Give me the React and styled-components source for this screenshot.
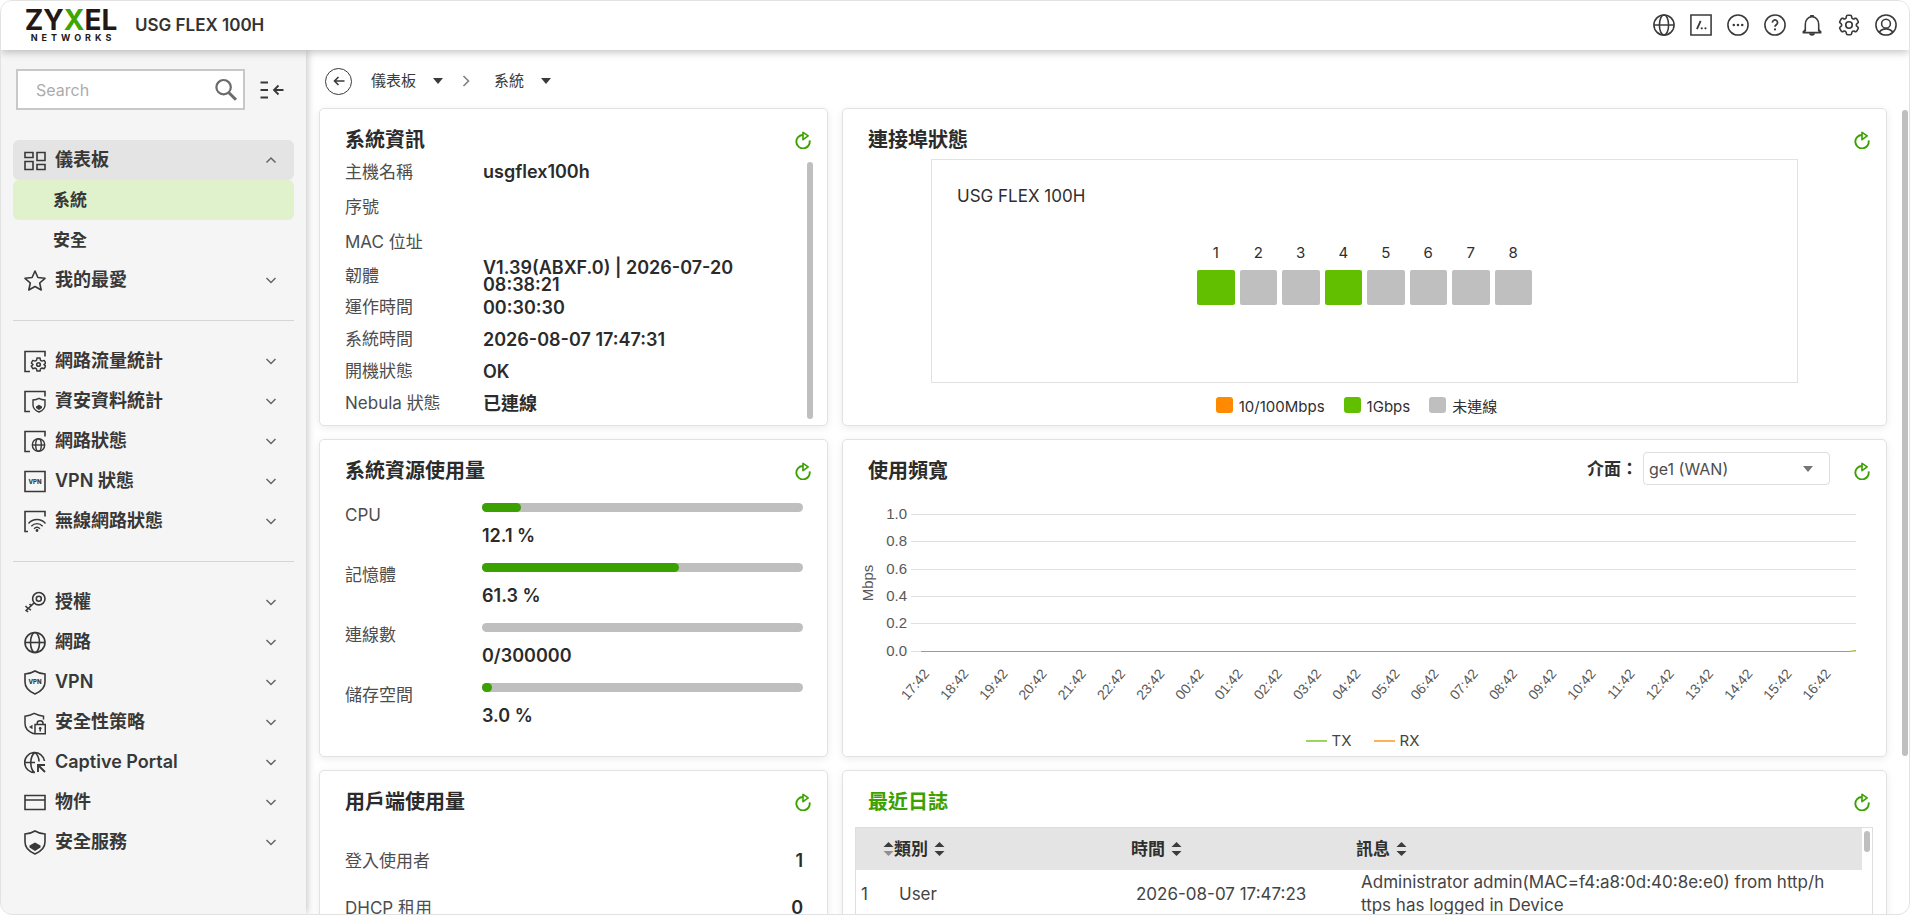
import React from 'react';
import styled, { createGlobalStyle, css } from 'styled-components';
import { HiOutlineCog6Tooth } from 'react-icons/hi2';

const GlobalStyle = createGlobalStyle`
  *, *::before, *::after {
    box-sizing: border-box;
  }
  body {
    margin: 0;
    background: #fff;
    color: #2f2f2f;
    font-family: Inter, 'Noto Sans CJK TC', sans-serif;
    font-size: 17px;
    line-height: 24px;
  }
  button, input, select {
    font: inherit;
    color: inherit;
  }
  h1, h2, p, dl, dd, ul {
    margin: 0;
    padding: 0;
  }
  svg {
    display: block;
  }
`;

/* icons */

const Icon = ({ children, size = 22, box = 24, weight = 1.7 }) => (
  <svg
    width={size}
    height={size}
    viewBox={`0 0 ${box} ${box}`}
    fill="none"
    stroke="currentColor"
    strokeWidth={weight}
    aria-hidden="true"
  >
    {children}
  </svg>
);

const solid = { fill: 'currentColor', stroke: 'none' };

const GlobeIcon = () => (
  <Icon>
    <circle cx="12" cy="12" r="11" />
    <ellipse cx="12" cy="12" rx="5" ry="11" />
    <path d="M1 12h22" />
  </Icon>
);

const ConsoleIcon = () => (
  <Icon>
    <path d="M1 1h22v22H1z" />
    <path d="M11.6 7.5 7.6 16.5" strokeWidth="2" />
    <circle cx="12.8" cy="15.6" r="1.2" {...solid} />
    <circle cx="16.9" cy="15.6" r="1.2" {...solid} />
  </Icon>
);

const MoreIcon = () => (
  <Icon>
    <circle cx="12" cy="12" r="11" />
    <circle cx="7.4" cy="12" r="1.4" {...solid} />
    <circle cx="12" cy="12" r="1.4" {...solid} />
    <circle cx="16.6" cy="12" r="1.4" {...solid} />
  </Icon>
);

const HelpIcon = () => (
  <Icon>
    <circle cx="12" cy="12" r="11" />
    <path d="M9.2 9.4a2.8 2.8 0 1 1 4.4 2.2c-1 .8-1.6 1.2-1.6 2.4" strokeWidth="1.9" />
    <circle cx="12" cy="16.8" r="1.2" {...solid} />
  </Icon>
);

const BellIcon = () => (
  <Icon>
    <path d="M4.7 19V11.2C4.7 6.6 7.7 3 12 3s7.3 3.6 7.3 8.2V19" />
    <path d="M2 20.2l2.7-3M22 20.2l-2.7-3M1.8 20.3h20.4" strokeWidth="2" />
    <path d="M10 1.2h4v2h-4zM8.8 21h6.4a3.2 2.6 0 0 1-6.4 0z" {...solid} />
  </Icon>
);

const UserIcon = () => (
  <Icon>
    <circle cx="12" cy="12" r="11" />
    <circle cx="12" cy="10.5" r="4.8" />
    <path d="M4.6 19.8c1.8-2.4 4.3-3.6 7.4-3.6s5.6 1.2 7.4 3.6" />
  </Icon>
);

const RefreshIcon = () => (
  <svg width="16" height="18" viewBox="0 0 16 18" fill="none" stroke="currentColor" strokeWidth="1.9" aria-hidden="true">
    <path d="M14.6 9.4A6.7 6.7 0 1 1 8 4" />
    <path d="M8 1.3 13.2 4.9 8 8.7z" strokeWidth="1.6" strokeLinejoin="round" />
  </svg>
);

const SearchIcon = () => (
  <Icon size={24} weight={2.2}>
    <circle cx="9.6" cy="9.2" r="7.2" />
    <path d="M14.9 14.7 22 21.8" strokeWidth="3" />
  </Icon>
);

const CollapseIcon = () => (
  <Icon size={24} weight={1.8}>
    <path d="M.5 4.500H8M.5 12H8M.5 19.500H8M14.5 12H23.500M18.500 7.500 14 12l4.500 4.500" />
  </Icon>
);

const ChevronIcon = ({ up }) => (
  <Icon size={12} box={12} weight={1.5}>
    <path d={up ? 'M1.500 8.500 6 4l4.500 4.500' : 'M1.500 4 6 8.500 10.500 4'} />
  </Icon>
);

const Corner = () => <path d="M6 21H1V1h20v5" />;

const shield = 'M11 1c3 1.800 6.300 2.800 10 3v8c0 5-4 9.500-10 12C5 21.500 1 17 1 12V4c3.700-.2 7-1.200 10-3z';

const Vpn = ({ y }) => (
  <text x="11" y={y} fontSize="6" fontWeight="800" textAnchor="middle" fill="currentColor" stroke="none">
    VPN
  </text>
);

const menuIcons = {
  dashboard: <path d="M1 3h8v5H1zM13 3h8v8h-8zM1 12h8v8H1zM13 15h8v5h-8z" />,
  star: <path d="M11 1.500l2.900 6.500 7.100.8-5.300 4.700 1.500 7L11 17l-6.200 3.500 1.500-7L1 8.800l7.100-.8z" strokeLinejoin="round" />,
  traffic: (
    <>
      <Corner />
      <circle cx="14.5" cy="14" r="1.8" />
      <path
        d="M13 7.500h3l.5 2.300 1.500.8 2.200-.7 1.500 2.600-1.700 1.500v.1l1.700 1.500-1.500 2.600-2.200-.7-1.500.8-.5 2.300h-3l-.5-2.300-1.500-.8-2.200.7-1.500-2.600L9 14.100V14l-1.700-1.500 1.500-2.600 2.200.7 1.500-.8z"
        strokeWidth="1.5"
        strokeLinejoin="round"
      />
    </>
  ),
  security: (
    <>
      <Corner />
      <path d="M15 7.800c1.800 1 3.700 1.500 6 1.700v5c0 3-2.200 5.500-6 7-3.800-1.500-6-4-6-7v-5c2.300-.2 4.200-.7 6-1.700z" strokeWidth="1.4" />
      <path d="M15 14.300l3 1.700v1.500l-3 2-3-2V16z" {...solid} />
    </>
  ),
  network: (
    <>
      <Corner />
      <circle cx="14.5" cy="14.5" r="6.2" strokeWidth="1.4" />
      <ellipse cx="14.5" cy="14.5" rx="2.8" ry="6.2" strokeWidth="1.4" />
      <path d="M8.300 14.500h12.400" strokeWidth="1.4" />
    </>
  ),
  vpnStatus: (
    <>
      <path d="M1 1h20v20H1z" />
      <Vpn y="13.2" />
    </>
  ),
  wifi: (
    <>
      <path d="M4 21H1V1h20v5" />
      <path d="M4.500 13c4.700-5.300 12.300-5.300 17 0M7.300 15.700c3.200-3.500 8.200-3.500 11.400 0M10 18.200c1.800-1.800 4.200-1.800 6 0" strokeWidth="1.4" />
      <circle cx="13" cy="20" r="1.4" {...solid} />
    </>
  ),
  key: (
    <>
      <circle cx="14.8" cy="7.2" r="6.2" />
      <circle cx="14.8" cy="7.2" r="2.5" />
      <path d="M10 11.500l-8.500 8M4.500 16.500l2.300 2.300M2 18.500l2 2M1.500 14.500l2.500 2.500M5.500 12.500l2.300 2.300" />
    </>
  ),
  globe: (
    <>
      <circle cx="11" cy="11" r="10" />
      <ellipse cx="11" cy="11" rx="4.5" ry="10" />
      <path d="M1 11h20" />
    </>
  ),
  vpn: (
    <>
      <path d={shield} />
      <Vpn y="14" />
    </>
  ),
  policy: (
    <>
      <path d="M19.500 8V4.700C16.200 4.300 13.200 3.300 10.200 1.800 7.400 3.300 4.300 4.300 1 4.700V12c0 5 3 8 8 10h2" strokeWidth="1.5" />
      <path d="M11 13h10.300v9.200H11zM13.200 13v-1.200a2.900 2.500 0 0 1 5.800 0V13M16.200 16v4" strokeWidth="1.5" />
      <circle cx="16.2" cy="16.7" r="1.3" {...solid} />
      <path d="M8.500 13.200v4.600L5 15.500z" {...solid} />
    </>
  ),
  portal: (
    <>
      <path d="M20.500 9.500A10 10 0 1 0 11 21M11 1C5.500 5 5.500 17 10.500 21M11 1c3 2.500 4 5.500 4 9M1 11h10" />
      <path d="M14 20.500V13.500h7M14 13.500l7 7" strokeWidth="1.9" />
    </>
  ),
  object: <path d="M1 4h20v14H1zM1 8.500h20" />,
  service: (
    <>
      <path d={shield} />
      <path d="M11 12.500l5.500 3v2L11 21l-5.500-3.500v-2z" {...solid} />
    </>
  ),
};

const MenuIcon = ({ name }) => (
  <svg
    width="22"
    height="25"
    viewBox={['vpn', 'service'].includes(name) ? '0 0 22 25' : '0 -1.5 22 25'}
    fill="none"
    stroke="currentColor"
    strokeWidth="1.6"
    aria-hidden="true"
  >
    {menuIcons[name]}
  </svg>
);

/* data */

const menuGroups = [
  [
    { label: '儀表板', icon: 'dashboard', open: true, items: ['系統', '安全'] },
    { label: '我的最愛', icon: 'star' },
  ],
  [
    { label: '網路流量統計', icon: 'traffic' },
    { label: '資安資料統計', icon: 'security' },
    { label: '網路狀態', icon: 'network' },
    { label: 'VPN 狀態', icon: 'vpnStatus' },
    { label: '無線網路狀態', icon: 'wifi' },
  ],
  [
    { label: '授權', icon: 'key' },
    { label: '網路', icon: 'globe' },
    { label: 'VPN', icon: 'vpn' },
    { label: '安全性策略', icon: 'policy' },
    { label: 'Captive Portal', icon: 'portal' },
    { label: '物件', icon: 'object' },
    { label: '安全服務', icon: 'service' },
  ],
];

const systemInfo = [
  { label: '主機名稱', value: 'usgflex100h', tall: true },
  { label: '序號', value: '', tall: true },
  { label: 'MAC 位址', value: '', tall: true },
  { label: '韌體', value: 'V1.39(ABXF.0) | 2026-07-20 08:38:21' },
  { label: '運作時間', value: '00:30:30' },
  { label: '系統時間', value: '2026-08-07 17:47:31' },
  { label: '開機狀態', value: 'OK' },
  { label: 'Nebula 狀態', value: '已連線' },
];

const resources = [
  { label: 'CPU', percent: 12.1, value: '12.1 %' },
  { label: '記憶體', percent: 61.3, value: '61.3 %' },
  { label: '連線數', percent: 0, value: '0/300000' },
  { label: '儲存空間', percent: 3, value: '3.0 %' },
];

const clients = [
  { label: '登入使用者', value: 1 },
  { label: 'DHCP 租用', value: 0 },
];

const ports = [1, 2, 3, 4, 5, 6, 7, 8];
const activePorts = [1, 4];

const yTicks = ['1.0', '0.8', '0.6', '0.4', '0.2', '0.0'];
const hours = Array.from({ length: 24 }, (_, i) => `${String((17 + i) % 24).padStart(2, '0')}:42`);

/* parts */

function Card({ title, accent, tools, children }) {
  return (
    <Panel>
      <PanelHead>
        <PanelTitle $accent={accent}>{title}</PanelTitle>
        {tools}
        <RefreshButton type="button" aria-label={`重新整理 ${title}`}>
          <RefreshIcon />
        </RefreshButton>
      </PanelHead>
      {children}
    </Panel>
  );
}

function Sidebar() {
  return (
    <Side>
      <SearchRow>
        <SearchBox>
          <SearchInput type="text" placeholder="Search" aria-label="Search" />
          <SearchIcon />
        </SearchBox>
        <PlainButton type="button" aria-label="收合選單">
          <CollapseIcon />
        </PlainButton>
      </SearchRow>
      <nav>
        {menuGroups.map((group, i) => (
          <MenuGroup key={'group_' + i}>
            {group.map(({ label, icon, open, items }) => (
              <li key={label}>
                <MenuButton type="button" $open={open} aria-expanded={!!open}>
                  <MenuIcon name={icon} />
                  <MenuLabel>{label}</MenuLabel>
                  <MenuArrow>
                    <ChevronIcon up={open} />
                  </MenuArrow>
                </MenuButton>
                {items &&
                  items.map((item, j) => (
                    <SubLink href="#" key={item} $active={j == 0}>
                      {item}
                    </SubLink>
                  ))}
              </li>
            ))}
          </MenuGroup>
        ))}
      </nav>
    </Side>
  );
}

function BandwidthChart() {
  return (
    <Chart viewBox="0 0 1043 261" role="img" aria-label="TX / RX Mbps">
      {yTicks.map((tick, i) => {
        const y = Math.round(17 + i * 27.3) + 0.5;
        return (
          <g key={tick}>
            <path d={`M68 ${y}H1013`} stroke="#e0e0e0" />
            <text x="64" y={y + 4} textAnchor="end">
              {tick}
            </text>
          </g>
        );
      })}
      <path d="M78 154.500H1006l7-1" stroke="#93b81c" strokeWidth="1.2" fill="none" />
      <text transform="translate(30 86) rotate(-90)" textAnchor="middle">
        Mbps
      </text>
      {hours.map((hour, i) => (
        <text key={hour} transform={`translate(${87 + i * 39.2} 177) rotate(-50)`} textAnchor="end" fontSize="14">
          {hour}
        </text>
      ))}
    </Chart>
  );
}

const SortArrows = ({ dim }) => (
  <svg width="11" height="14" viewBox="0 0 11 14" fill="#3c3c3c" aria-hidden="true">
    <path d="M5.500 0 10.500 5H.5z" />
    <path d="M5.500 14 10.500 9H.5z" opacity={dim ? 0.5 : 1} />
  </svg>
);

export default function App() {
  return (
    <>
      <GlobalStyle />
      <Shell>
        <TopBar>
          <Logo>
            <LogoName>
              ZY<em>X</em>EL
            </LogoName>
            <LogoSub>NETWORKS</LogoSub>
          </Logo>
          <DeviceName>USG FLEX 100H</DeviceName>
          <TopTools>
            <PlainButton type="button" aria-label="語言">
              <GlobeIcon />
            </PlainButton>
            <PlainButton type="button" aria-label="主控台">
              <ConsoleIcon />
            </PlainButton>
            <PlainButton type="button" aria-label="更多">
              <MoreIcon />
            </PlainButton>
            <PlainButton type="button" aria-label="說明">
              <HelpIcon />
            </PlainButton>
            <PlainButton type="button" aria-label="通知">
              <BellIcon />
            </PlainButton>
            <PlainButton type="button" aria-label="設定">
              <HiOutlineCog6Tooth size={26} />
            </PlainButton>
            <PlainButton type="button" aria-label="帳號">
              <UserIcon />
            </PlainButton>
          </TopTools>
        </TopBar>

        <Body>
          <Sidebar />
          <Main>
            <Crumbs aria-label="Breadcrumb">
              <BackButton type="button" aria-label="返回">
                <Icon size={12} box={12} weight={1.6}>
                  <path d="M11.500 6H1.500M5.500 2l-4 4 4 4" />
                </Icon>
              </BackButton>
              <Crumb type="button">
                儀表板 <Caret />
              </Crumb>
              <Icon size={12} box={12} weight={1.6}>
                <path d="M3.500 1l5 5-5 5" />
              </Icon>
              <Crumb type="button">
                系統 <Caret />
              </Crumb>
            </Crumbs>

            <Scroller>
              <Grid>
                <Card title="系統資訊">
                  <InfoWrap>
                    <InfoList>
                      {systemInfo.map(({ label, value, tall }) => (
                        <InfoRow key={label} $tall={tall}>
                          <Label>{label}</Label>
                          <Value>{value}</Value>
                        </InfoRow>
                      ))}
                    </InfoList>
                    <Thumb $size="257px" />
                  </InfoWrap>
                </Card>

                <Card title="連接埠狀態">
                  <DeviceBox>
                    <p>USG FLEX 100H</p>
                    <Ports>
                      {ports.map((port) => (
                        <li key={port}>
                          {port}
                          <Port $up={activePorts.includes(port)} />
                        </li>
                      ))}
                    </Ports>
                  </DeviceBox>
                  <PortLegend>
                    <li>
                      <Swatch $color="#ff8a00" />
                      10/100Mbps
                    </li>
                    <li>
                      <Swatch $color="#62bf00" />
                      1Gbps
                    </li>
                    <li>
                      <Swatch $color="#bfbfbf" />
                      未連線
                    </li>
                  </PortLegend>
                </Card>

                <Card title="系統資源使用量">
                  <UsageList>
                    {resources.map(({ label, percent, value }) => (
                      <UsageRow key={label}>
                        <Label>{label}</Label>
                        <dd>
                          <Track>{percent > 0 && <Fill style={{ width: `${percent}%` }} />}</Track>
                          <Value as="span">{value}</Value>
                        </dd>
                      </UsageRow>
                    ))}
                  </UsageList>
                </Card>

                <Card
                  title="使用頻寬"
                  tools={
                    <InterfaceField>
                      <label htmlFor="interface">介面：</label>
                      <SelectWrap>
                        <Select id="interface" defaultValue="ge1">
                          <option value="ge1">ge1 (WAN)</option>
                        </Select>
                        <Caret $muted />
                      </SelectWrap>
                    </InterfaceField>
                  }
                >
                  <BandwidthChart />
                  <ChartLegend>
                    <li>
                      <Dash $color="#9bd45f" />
                      TX
                    </li>
                    <li>
                      <Dash $color="#ffb255" />
                      RX
                    </li>
                  </ChartLegend>
                </Card>

                <Card title="用戶端使用量">
                  <ClientList>
                    {clients.map(({ label, value }) => (
                      <ClientRow key={label}>
                        <Label>{label}</Label>
                        <Value>{value}</Value>
                      </ClientRow>
                    ))}
                  </ClientList>
                </Card>

                <Card title="最近日誌" accent>
                  <LogFrame>
                    <LogTable>
                      <colgroup>
                        <col width="38" />
                        <col width="237" />
                        <col width="225" />
                        <col />
                      </colgroup>
                      <thead>
                        <tr>
                          <th aria-label="#">
                            <SortButton type="button" $end>
                              <SortArrows dim />
                            </SortButton>
                          </th>
                          {['類別', '時間', '訊息'].map((head) => (
                            <th key={head}>
                              <SortButton type="button">
                                {head} <SortArrows />
                              </SortButton>
                            </th>
                          ))}
                        </tr>
                      </thead>
                      <tbody>
                        <tr>
                          <td>1</td>
                          <td>User</td>
                          <td>2026-08-07 17:47:23</td>
                          <td>Administrator admin(MAC=f4:a8:0d:40:8e:e0) from http/https has logged in Device</td>
                        </tr>
                      </tbody>
                    </LogTable>
                    <LogRail>
                      <Thumb $size="21px" />
                    </LogRail>
                  </LogFrame>
                </Card>
              </Grid>
              <PageRail>
                <Thumb $size="646px" />
              </PageRail>
            </Scroller>
          </Main>
        </Body>
      </Shell>
    </>
  );
}

const Shell = styled.div`
  display: flex;
  flex-direction: column;
  height: 100vh;
  overflow: hidden;
  border: 1px solid #e2e2e2;
  border-radius: 12px;
`;

const TopBar = styled.header`
  display: flex;
  align-items: center;
  flex: none;
  height: 49px;
  padding: 0 12px 2px 24px;
  background: #fff;
  box-shadow: 0 2px 8px rgba(0, 0, 0, 0.25);
  z-index: 2;
`;

const Logo = styled.div`
  display: flex;
  flex-direction: column;
  align-items: center;
  width: 92px;
  padding-top: 2px;
  color: #231815;
`;

const LogoName = styled.span`
  font-size: 28px;
  font-weight: 700;
  line-height: 24px;
  em {
    font-style: normal;
    color: #3fa500;
  }
`;

const LogoSub = styled.span`
  padding-left: 4px;
  font-size: 9px;
  font-weight: 700;
  line-height: 12px;
  letter-spacing: 4px;
`;

const DeviceName = styled.h1`
  margin-left: 18px;
  font-size: 17px;
  font-weight: 600;
  color: #333;
`;

const TopTools = styled.div`
  display: flex;
  align-items: center;
  gap: 15px;
  margin-left: auto;
  color: #3a3a3a;
`;

const PlainButton = styled.button`
  display: flex;
  align-items: center;
  justify-content: center;
  flex: none;
  min-width: 22px;
  height: 24px;
  padding: 0;
  border: none;
  background: none;
  cursor: pointer;
  ${TopTools} & {
    width: 22px;
  }
  svg {
    flex: none;
  }
`;

const Body = styled.div`
  display: flex;
  flex: 1;
  min-height: 0;
`;

const Side = styled.aside`
  flex: none;
  width: 305px;
  padding: 19px 12px 20px 12px;
  background: #f5f5f5;
  box-shadow: 1px 0 8px rgba(0, 0, 0, 0.25);
  color: #383838;
  z-index: 1;
`;

const SearchRow = styled.div`
  display: flex;
  align-items: center;
  gap: 15px;
  padding: 0 10px 0 3px;
  margin-bottom: 30px;
`;

const SearchBox = styled.div`
  display: flex;
  align-items: center;
  flex: 1;
  min-width: 0;
  height: 41px;
  padding-right: 5px;
  border: 2px solid #c8c8c8;
  background: #fff;
  svg {
    flex: none;
    color: #6b6b6b;
  }
`;

const SearchInput = styled.input`
  flex: 1;
  min-width: 0;
  height: 36px;
  padding: 0 0 0 18px;
  border: none;
  outline: none;
  background: none;
  font-size: 16px;
  &::placeholder {
    color: #acacac;
  }
`;

const MenuGroup = styled.ul`
  list-style: none;
  & + & {
    margin-top: 20px;
    padding-top: 20px;
    border-top: 1px solid #d5d5d5;
  }
`;

const MenuButton = styled.button`
  display: flex;
  align-items: center;
  gap: 9px;
  width: 100%;
  height: 40px;
  padding: 0 17px 0 11px;
  border: none;
  border-radius: 6px;
  background: ${({ $open }) => ($open ? '#e4e4e4' : 'transparent')};
  font-size: 18px;
  font-weight: 600;
  text-align: left;
  cursor: pointer;
`;

const MenuLabel = styled.span`
  flex: 1;
`;

const MenuArrow = styled.span`
  color: #666;
`;

const SubLink = styled.a`
  display: block;
  height: 40px;
  padding-left: 40px;
  border-radius: 6px;
  font-size: 17px;
  font-weight: 600;
  line-height: 40px;
  color: inherit;
  text-decoration: none;
  ${({ $active }) =>
    $active &&
    css`
      background: #dff2cb;
    `}
`;

const Main = styled.main`
  display: flex;
  flex-direction: column;
  flex: 1;
  min-width: 0;
  padding-left: 13px;
`;

const Crumbs = styled.nav`
  display: flex;
  align-items: center;
  flex: none;
  height: 58px;
  padding: 4px 0 0 6px;
  color: #3a3a3a;
  > svg {
    color: #808080;
  }
`;

const BackButton = styled.button`
  display: grid;
  place-items: center;
  width: 27px;
  height: 27px;
  margin-right: 14px;
  padding: 0;
  border: 1px solid #3a3a3a;
  border-radius: 50%;
  background: none;
`;

const Crumb = styled.button`
  display: flex;
  align-items: center;
  gap: 17px;
  padding: 0 22px 0 5px;
  border: none;
  background: none;
  font-size: 15px;
  & + svg {
    margin: 0 17px 0 -5px;
  }
`;

const Caret = styled.span`
  flex: none;
  border: 5px solid transparent;
  border-top: 6px solid ${({ $muted }) => ($muted ? '#757575' : '#3a3a3a')};
  border-bottom: none;
`;

const Scroller = styled.div`
  display: flex;
  flex: 1;
  gap: 15px;
  min-height: 0;
  padding-right: 1px;
`;

const PageRail = styled.div`
  flex: none;
  width: 6px;
  padding-top: 2px;
`;

const Thumb = styled.span`
  display: block;
  flex: none;
  width: 6px;
  height: ${({ $size }) => $size};
  border-radius: 3px;
  background: #bfbfbf;
`;

const Grid = styled.div`
  display: grid;
  flex: 1;
  min-width: 0;
  grid-template-columns: 509fr 1045fr;
  grid-auto-rows: 318px;
  gap: 13px 14px;
`;

const Panel = styled.section`
  display: flex;
  flex-direction: column;
  min-width: 0;
  border: 1px solid #e2e2e2;
  border-radius: 5px;
  background: #fff;
  box-shadow: 0 2px 8px rgba(0, 0, 0, 0.08);
`;

const PanelHead = styled.header`
  display: flex;
  align-items: center;
  flex: none;
  height: 45px;
  padding: 17px 16px 0 25px;
`;

const PanelTitle = styled.h2`
  margin-right: auto;
  font-size: 20px;
  font-weight: 600;
  line-height: 28px;
  color: ${({ $accent }) => ($accent ? '#3ba101' : '#2b2b2b')};
`;

const RefreshButton = styled(PlainButton)`
  min-width: 16px;
  color: #3ba101;
`;

const InfoWrap = styled.div`
  display: flex;
  align-items: flex-end;
  padding: 0 14px 0 25px;
`;

const InfoList = styled.dl`
  flex: 1;
`;

const InfoRow = styled.div`
  display: grid;
  grid-template-columns: 138px 1fr;
  align-items: center;
  height: ${({ $tall }) => ($tall ? '35px' : '32px')};
  padding-right: 40px;
`;

const Label = styled.dt`
  color: #4d4d4d;
  white-space: nowrap;
`;

const Value = styled.dd`
  margin: 0;
  font-size: 18px;
  font-weight: 600;
  color: #2b2b2b;
  ${InfoRow} & {
    line-height: 17px;
  }
`;

const UsageList = styled.dl`
  padding: 18px 24px 0 25px;
`;

const UsageRow = styled.div`
  display: grid;
  grid-template-columns: 137px 1fr;
  height: 60px;
  dt {
    line-height: 24px;
  }
  dd > span {
    display: block;
    padding-top: 12px;
  }
`;

const Track = styled.div`
  height: 9px;
  border-radius: 5px;
  background: #bfbfbf;
`;

const Fill = styled.div`
  min-width: 9px;
  height: 9px;
  border-radius: 5px;
  background: #3ba101;
`;

const ClientList = styled.dl`
  padding: 21px 24px 0 25px;
`;

const ClientRow = styled.div`
  display: flex;
  align-items: center;
  justify-content: space-between;
  height: 47px;
`;

const DeviceBox = styled.div`
  height: 224px;
  margin: 5px 88px 0;
  padding: 24px 25px;
  border: 1px solid #e2e2e2;
`;

const Ports = styled.ul`
  display: grid;
  grid-template-columns: repeat(8, 1fr);
  gap: 5px;
  width: 335px;
  margin: 33px auto 0;
  list-style: none;
  font-size: 15px;
  text-align: center;
`;

const Port = styled.div`
  height: 35px;
  margin-top: 5px;
  border-radius: 2px;
  background: ${({ $up }) => ($up ? '#62bf00' : '#bfbfbf')};
`;

const PortLegend = styled.ul`
  display: flex;
  justify-content: center;
  gap: 19px;
  padding: 12px 16px 0 0;
  list-style: none;
  font-size: 15px;
  li {
    display: flex;
    align-items: center;
    gap: 6px;
  }
`;

const Swatch = styled.span`
  width: 17px;
  height: 16px;
  margin-bottom: 4px;
  border-radius: 3px;
  background: ${({ $color }) => $color};
`;

const InterfaceField = styled.div`
  display: flex;
  align-items: center;
  gap: 5px;
  margin-right: 24px;
  margin-bottom: 5px;
  font-weight: 600;
`;

const SelectWrap = styled.div`
  display: flex;
  align-items: center;
  width: 187px;
  height: 33px;
  padding-right: 16px;
  border: 1px solid #dedede;
  border-radius: 4px;
`;

const Select = styled.select`
  flex: 1;
  height: 31px;
  padding: 0 5px;
  border: none;
  appearance: none;
  background: none;
  font-size: 16px;
  font-weight: 400;
  color: #4d4d4d;
`;

const Chart = styled.svg`
  flex: none;
  width: 100%;
  margin-top: 12px;
  margin-bottom: -29px;
  font-family: 'Liberation Sans', sans-serif;
  font-size: 15px;
  fill: #595959;
`;

const ChartLegend = styled.ul`
  display: flex;
  justify-content: center;
  gap: 22px;
  padding-right: 4px;
  list-style: none;
  font-size: 15px;
  color: #444;
  li {
    display: flex;
    align-items: center;
    gap: 5px;
  }
`;

const Dash = styled.span`
  width: 21px;
  height: 2px;
  background: ${({ $color }) => $color};
`;

const LogFrame = styled.div`
  display: flex;
  flex: 1;
  margin: 11px 13px 0 12px;
  border: 1px solid #dedede;
`;

const LogTable = styled.table`
  flex: 1;
  align-self: flex-start;
  table-layout: fixed;
  width: 100%;
  border-collapse: collapse;
  text-align: left;
  th {
    height: 42px;
    padding: 0;
    background: #e4e4e4;
  }
  td {
    height: 48px;
    padding: 0 34px 0 5px;
    line-height: 23px;
    color: #444;
    word-break: break-all;
  }
  td:nth-child(-n + 3) {
    padding-right: 0;
  }
`;

const SortButton = styled.button`
  display: flex;
  align-items: center;
  justify-content: ${({ $end }) => ($end ? 'flex-end' : 'flex-start')};
  gap: 6px;
  width: 100%;
  padding: 0;
  border: none;
  background: none;
  font-weight: 600;
`;

const LogRail = styled.div`
  flex: none;
  width: 10px;
  padding: 3px 2px;
`;
